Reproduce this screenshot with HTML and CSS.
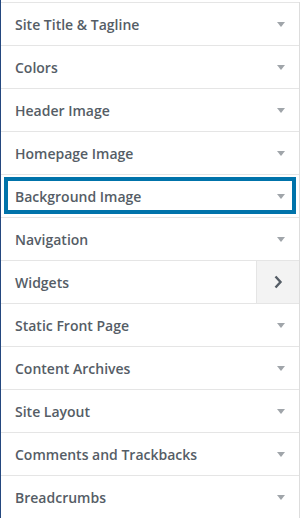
FILE: index.html
```html
<!DOCTYPE html>
<html lang="en">
<head>
    <meta charset="UTF-8">
    <meta name="viewport" content="width=device-width, initial-scale=1.0">
    <title>Customizer Sections</title>
    <link rel="stylesheet" href="styles.css">
</head>
<body>
    <div class="panel">
        <ul class="sections">
            <li class="section"><span class="title">Site Title &amp; Tagline</span><span class="arrow"></span></li>
            <li class="section"><span class="title">Colors</span><span class="arrow"></span></li>
            <li class="section"><span class="title">Header Image</span><span class="arrow"></span></li>
            <li class="section"><span class="title">Homepage Image</span><span class="arrow"></span></li>
            <li class="section focused"><span class="title">Background Image</span><span class="arrow"></span></li>
            <li class="section"><span class="title">Navigation</span><span class="arrow"></span></li>
            <li class="section open"><span class="title">Widgets</span>
                <span class="go">
                    <svg width="10" height="14" viewBox="0 0 10 14"><path d="M2.5 1.5 L7.5 7 L2.5 12.5" fill="none" stroke="#555d66" stroke-width="2.4"/></svg>
                </span>
            </li>
            <li class="section"><span class="title">Static Front Page</span><span class="arrow"></span></li>
            <li class="section"><span class="title">Content Archives</span><span class="arrow"></span></li>
            <li class="section"><span class="title">Site Layout</span><span class="arrow"></span></li>
            <li class="section"><span class="title">Comments and Trackbacks</span><span class="arrow"></span></li>
            <li class="section"><span class="title">Breadcrumbs</span><span class="arrow"></span></li>
        </ul>
    </div>
</body>
</html>
```
FILE: styles.css
```css
* {
    margin: 0;
    padding: 0;
    box-sizing: border-box;
}
body {
    font-family: "Open Sans", Arial, sans-serif;
    background-color: #fff;
    width: 301px;
    height: 518px;
    overflow: hidden;
}
.panel {
    border-left: 1px solid #24487f;
    height: 518px;
    padding-top: 2px;
}
.sections {
    list-style: none;
    border-right: 1px solid #dddddd;
    margin-right: 1px;
}
.section {
    display: flex;
    align-items: center;
    justify-content: space-between;
    height: 43px;
    border-top: 1px solid #e5e5e5;
    padding-left: 14px;
    padding-right: 14px;
    background-color: #fff;
}
.title {
    font-size: 14px;
    font-weight: 600;
    color: #555d66;
}
.arrow {
    width: 0;
    height: 0;
    border-left: 4px solid transparent;
    border-right: 4px solid transparent;
    border-top: 5px solid #a0a5aa;
    margin-right: 0;
}
.focused {
    outline: 4px solid #0073aa;
    outline-offset: -7px;
}
.open {
    padding-right: 0;
}
.go {
    display: flex;
    align-items: center;
    justify-content: center;
    width: 43px;
    align-self: stretch;
    background-color: #f3f3f3;
    border-left: 1px solid #e5e5e5;
}
```
